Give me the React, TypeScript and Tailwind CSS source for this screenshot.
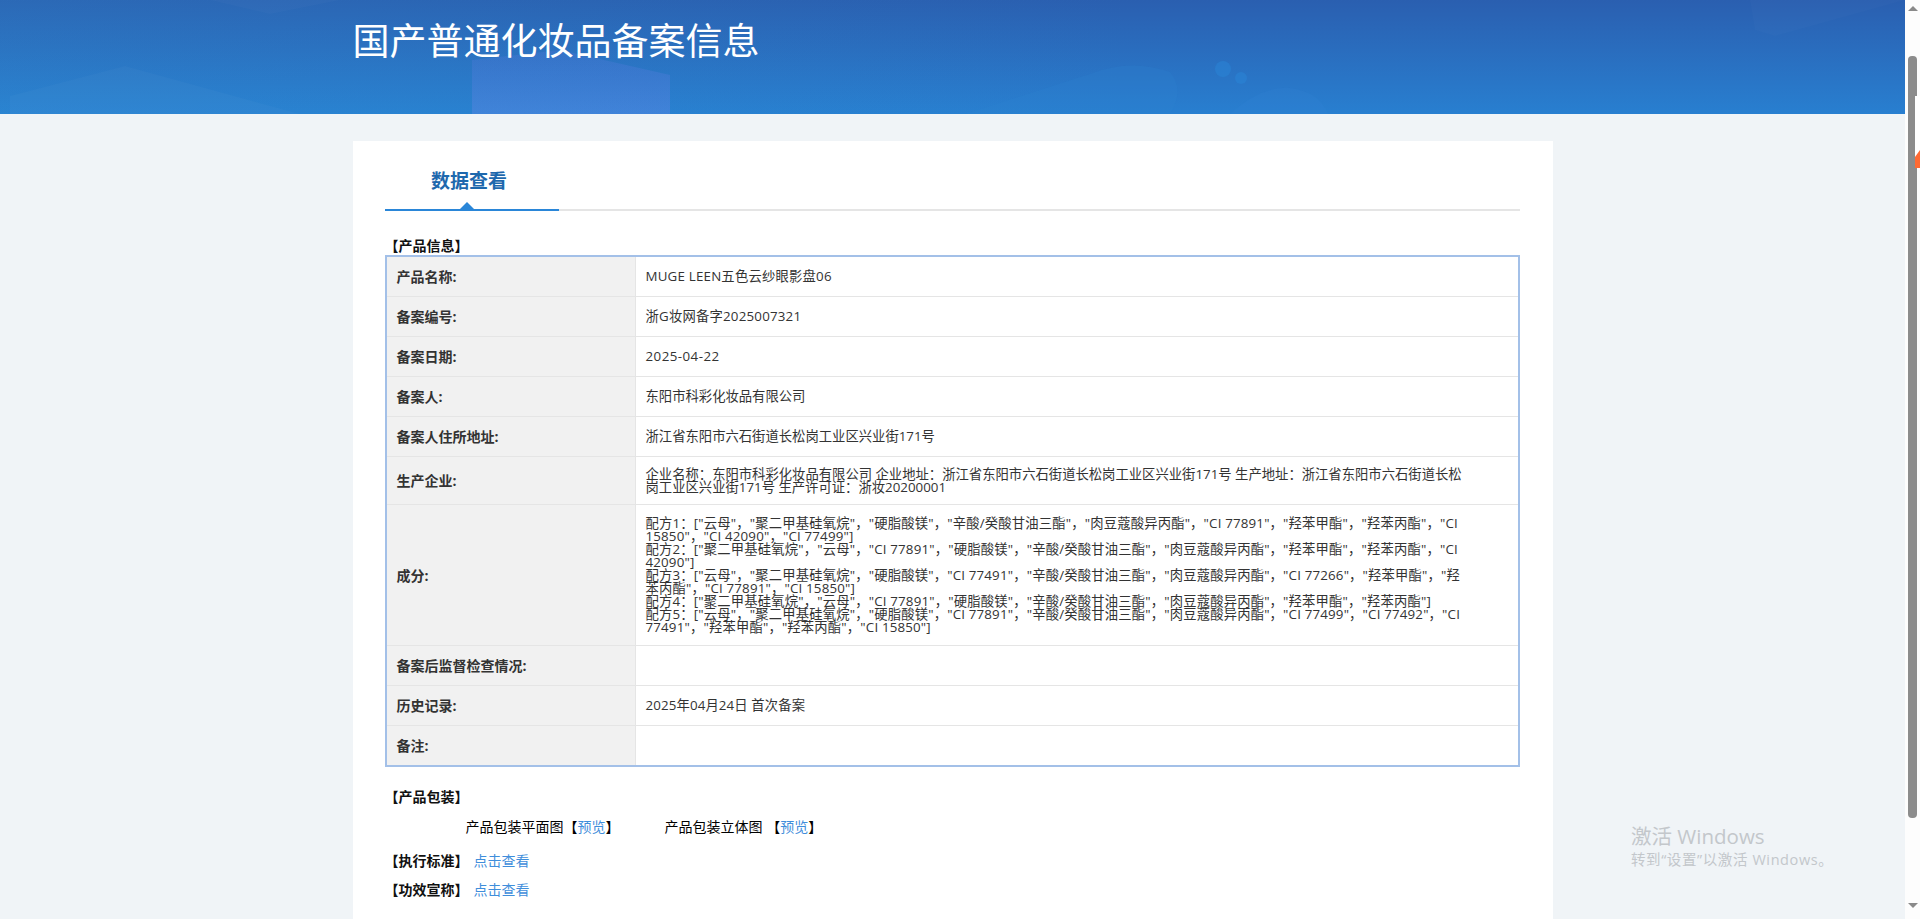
const FONT = "font-['Open_Sans','Noto_Sans_CJK_SC',sans-serif]";

const rows: { label: string; value: string[]; height: string; track?: string }[] = [
  { label: "产品名称:", value: ["MUGE LEEN五色云纱眼影盘06"], height: "h-[40px]", track: "tracking-[0.2px]" },
  { label: "备案编号:", value: ["浙G妆网备字2025007321"], height: "h-[40px]", track: "tracking-[0.2px]" },
  { label: "备案日期:", value: ["2025-04-22"], height: "h-[40px]", track: "tracking-[0.45px]" },
  { label: "备案人:", value: ["东阳市科彩化妆品有限公司"], height: "h-[40px]" },
  { label: "备案人住所地址:", value: ["浙江省东阳市六石街道长松岗工业区兴业街171号"], height: "h-[40px]" },
  {
    label: "生产企业:",
    height: "h-[48px]",
    value: [
      "企业名称：东阳市科彩化妆品有限公司 企业地址：浙江省东阳市六石街道长松岗工业区兴业街171号 生产地址：浙江省东阳市六石街道长松",
      "岗工业区兴业街171号 生产许可证：浙妆20200001",
    ],
  },
  {
    label: "成分:",
    height: "h-[141px]",
    track: "tracking-[0.17px]",
    value: [
      '配方1：["云母"，"聚二甲基硅氧烷"，"硬脂酸镁"，"辛酸/癸酸甘油三酯"，"肉豆蔻酸异丙酯"，"CI 77891"，"羟苯甲酯"，"羟苯丙酯"，"CI',
      '15850"，"CI 42090"，"CI 77499"]',
      '配方2：["聚二甲基硅氧烷"，"云母"，"CI 77891"，"硬脂酸镁"，"辛酸/癸酸甘油三酯"，"肉豆蔻酸异丙酯"，"羟苯甲酯"，"羟苯丙酯"，"CI',
      '42090"]',
      '配方3：["云母"，"聚二甲基硅氧烷"，"硬脂酸镁"，"CI 77491"，"辛酸/癸酸甘油三酯"，"肉豆蔻酸异丙酯"，"CI 77266"，"羟苯甲酯"，"羟',
      '苯丙酯"，"CI 77891"，"CI 15850"]',
      '配方4：["聚二甲基硅氧烷"，"云母"，"CI 77891"，"硬脂酸镁"，"辛酸/癸酸甘油三酯"，"肉豆蔻酸异丙酯"，"羟苯甲酯"，"羟苯丙酯"]',
      '配方5：["云母"，"聚二甲基硅氧烷"，"硬脂酸镁"，"CI 77891"，"辛酸/癸酸甘油三酯"，"肉豆蔻酸异丙酯"，"CI 77499"，"CI 77492"，"CI',
      '77491"，"羟苯甲酯"，"羟苯丙酯"，"CI 15850"]',
    ],
  },
  { label: "备案后监督检查情况:", value: [], height: "h-[40px]" },
  { label: "历史记录:", value: ["2025年04月24日 首次备案"], height: "h-[40px]", track: "tracking-[0.12px]" },
  { label: "备注:", value: [], height: "h-[39px]" },
];

function Link({ children }: { children: React.ReactNode }) {
  return <a className="text-[#3f8edb]">{children}</a>;
}

function HeaderArt() {
  return (
    <svg className="absolute inset-0 h-[114px] w-[1905px]" viewBox="0 0 1905 114" fill="none">
      <defs>
        <linearGradient id="leftTint" x1="0" y1="0" x2="1" y2="0">
          <stop offset="0" stopColor="#33a0d8" stopOpacity="0.16" />
          <stop offset="0.6" stopColor="#33a0d8" stopOpacity="0" />
        </linearGradient>
        <linearGradient id="block" x1="0" y1="0" x2="0" y2="1">
          <stop offset="0" stopColor="#5c78e0" stopOpacity="0.22" />
          <stop offset="1" stopColor="#6a88e8" stopOpacity="0.36" />
        </linearGradient>
      </defs>
      <rect width="1905" height="114" fill="url(#leftTint)" />
      <path d="M10 114 L10 96 L125 66 L300 114 Z" fill="#ffffff" fillOpacity="0.025" />
      <path d="M472 114 L472 60 L560 50 L670 75 L670 114 Z" fill="url(#block)" />
      <path d="M210 0 L270 14 L340 0 Z" fill="#ffffff" fillOpacity="0.02" />
      <path d="M1750 0 L1755 30 L1775 36 L1905 0 Z" fill="#ffffff" fillOpacity="0.015" />
      <path d="M965 114 L1090 74 Q1130 58 1170 72 Q1185 90 1170 114 Z" fill="#2c86d0" fillOpacity="0.22" />
      <ellipse cx="1223" cy="69" rx="8" ry="8" fill="#2a86d8" fillOpacity="0.5" />
      <ellipse cx="1241" cy="78" rx="6" ry="6" fill="#2a86d8" fillOpacity="0.5" />
      <path d="M1230 114 Q1260 86 1290 88 Q1320 92 1328 114 Z" fill="#3a8ae0" fillOpacity="0.12" />
    </svg>
  );
}

function Scrollbar() {
  return (
    <div className="relative flex h-[919px] w-[15px] shrink-0 flex-col items-center bg-[#fdfdfd]">
      <div className="mt-[6px] h-0 w-0 border-x-[5px] border-b-[5px] border-x-transparent border-b-[#8a8a8a]" />
      <div className="mt-[45px] h-[762px] w-[9px] rounded-[4px] bg-[#8c8c8c]" />
      <div className="mt-[85px] h-0 w-0 border-x-[5px] border-t-[5px] border-x-transparent border-t-[#8a8a8a]" />
    </div>
  );
}

function EdgeTab() {
  return (
    <div className="absolute top-[96px] right-0 h-[72px] w-[5px] bg-white">
      <svg className="absolute bottom-0 left-0 h-[18px] w-[5px]" viewBox="0 0 5 18">
        <path d="M0 7 L5 0 L5 18 L0 18 Z" fill="#ff6a33" />
      </svg>
    </div>
  );
}

export default function App() {
  return (
    <div className={`relative flex h-[919px] w-[1920px] overflow-hidden bg-[#f0f4f7] ${FONT}`}>
      <main className="w-[1905px] shrink-0">
        <header className="relative h-[114px] bg-gradient-to-b from-[#2a5fb0] to-[#287fd0]">
          <HeaderArt />
          <div className="relative mx-auto w-[1200px]">
            <h1 className="pt-[18px] text-[37px] leading-[46px] font-normal text-white">国产普通化妆品备案信息</h1>
          </div>
        </header>

        <section className="mx-auto mt-[27px] h-[800px] w-[1200px] bg-white pr-[33px] pl-[32px]">
          <div className="relative flex h-[70px] border-b-2 border-[#e5e5e5]">
            <div className="relative -mb-[2px] flex h-[70px] w-[174px] justify-center border-b-2 border-[#2a86d8]">
              <span className="pt-[25px] pr-[5px] text-[19px] leading-[30px] font-bold text-[#1e68ad]">数据查看</span>
              <span className="absolute bottom-0 left-[75px] h-0 w-0 border-x-[7px] border-b-[7px] border-x-transparent border-b-[#2a86d8]" />
            </div>
          </div>

          <h2 className="mt-[26px] mb-px text-[14px] leading-[17px] font-bold text-[#111]">【产品信息】</h2>

          <table className="w-[1135px] table-fixed border-separate border-spacing-0 border-2 border-[#a3c0e8] text-[13.33px] leading-[13px] text-[#333]">
            <colgroup>
              <col className="w-[249px]" />
              <col />
            </colgroup>
            <tbody>
              {rows.map((r, i) => {
                const last = i === rows.length - 1;
                return (
                  <tr key={r.label}>
                    <td
                      className={`${r.height} border-r border-[#e5e5e5] bg-[#f1f1f1] px-[10px] align-middle text-[14px] font-bold ${last ? "" : "border-b"}`}
                    >
                      {r.label}
                    </td>
                    <td
                      className={`border-[#e5e5e5] px-[10px] align-middle whitespace-nowrap ${r.track ?? ""} ${last ? "" : "border-b"}`}
                    >
                      {r.value.map((line, j) => (
                        <div key={j}>{line}</div>
                      ))}
                    </td>
                  </tr>
                );
              })}
            </tbody>
          </table>

          <h2 className="mt-[21px] text-[14px] leading-[17px] font-bold text-[#111]">【产品包装】</h2>
          <div className="mt-[13px] flex pl-[81px] text-[14px] leading-[17px] text-black">
            <span className="w-[199px]">产品包装平面图【<Link>预览</Link>】</span>
            <span>产品包装立体图 【<Link>预览</Link>】</span>
          </div>
          <div className="mt-[17px] flex text-[14px] leading-[17px]">
            <span className="w-[89px] font-bold text-[#111]">【执行标准】</span>
            <Link>点击查看</Link>
          </div>
          <div className="mt-[12px] flex text-[14px] leading-[17px]">
            <span className="w-[89px] font-bold text-[#111]">【功效宣称】</span>
            <Link>点击查看</Link>
          </div>
        </section>
      </main>

      <Scrollbar />
      <EdgeTab />

      <div className="absolute top-[822px] left-[1631px] text-[#c3c7cb]">
        <div className="text-[20.5px] leading-[28px]">激活 Windows</div>
        <div className="text-[14.5px] leading-[20px] tracking-[0.6px]">转到“设置”以激活 Windows。</div>
      </div>
    </div>
  );
}
